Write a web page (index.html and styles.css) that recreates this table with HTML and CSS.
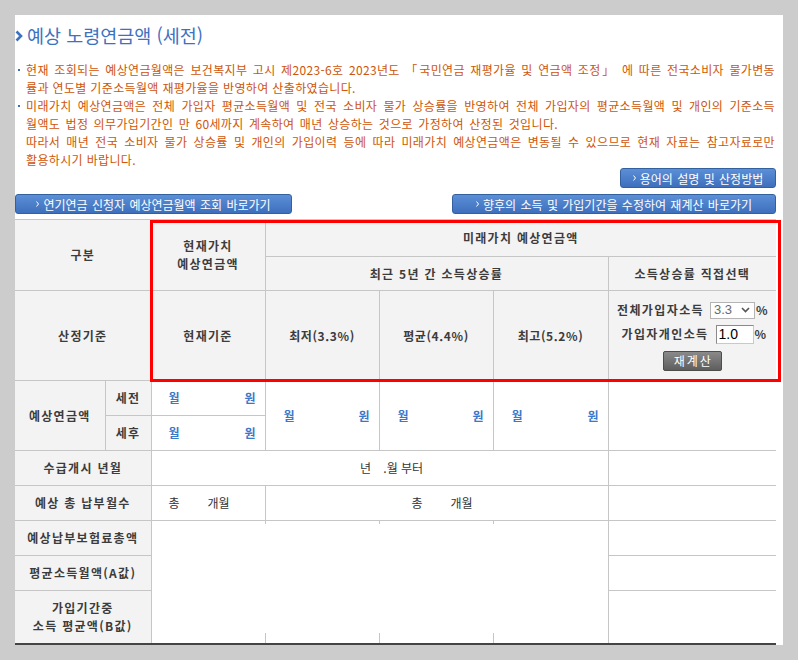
FILE: index.html
```html
<!DOCTYPE html>
<html lang="ko">
<head>
<meta charset="utf-8">
<title>예상 노령연금액 (세전)</title>
<link rel="stylesheet" href="styles.css">
</head>
<body>
<div class="panel">
  <h2 class="title"><svg class="chev" width="8" height="12" viewBox="0 0 8 12"><polyline points="1.5,1.5 6,6 1.5,10.5" fill="none" stroke="#3d72c0" stroke-width="2.6"/></svg>예상 노령연금액 (세전)</h2>

  <div class="notes">
    <p class="item"><span class="ln w749">현재 조회되는 예상연금월액은 보건복지부 고시 제2023-6호 2023년도 「국민연금 재평가율 및 연금액 조정」 에 따른 전국소비자 물가변동</span><span class="ln w346">률과 연도별 기준소득월액 재평가율을 반영하여 산출하였습니다.</span></p>
    <p class="item"><span class="ln w749">미래가치 예상연금액은 전체 가입자 평균소득월액 및 전국 소비자 물가 상승률을 반영하여 전체 가입자의 평균소득월액 및 개인의 기준소득</span><span class="ln w532">월액도 법정 의무가입기간인 만 60세까지 계속하여 매년 상승하는 것으로 가정하여 산정된 것입니다.</span><span class="ln w749">따라서 매년 전국 소비자 물가 상승률 및 개인의 가입이력 등에 따라 미래가치 예상연금액은 변동될 수 있으므로 현재 자료는 참고자료로만</span><span class="ln">활용하시기 바랍니다.</span></p>
  </div>

  <div class="btnrow end">
    <a class="btn w156"><svg class="arr" width="3" height="6" viewBox="0 0 3 6"><polyline points="0.5,0.5 2.5,3 0.5,5.5" fill="none" stroke="#fff" stroke-width="1"/></svg>용어의 설명 및 산정방법</a>
  </div>
  <div class="btnrow between">
    <a class="btn w277"><svg class="arr" width="3" height="6" viewBox="0 0 3 6"><polyline points="0.5,0.5 2.5,3 0.5,5.5" fill="none" stroke="#fff" stroke-width="1"/></svg>연기연금 신청자 예상연금월액 조회 바로가기</a>
    <a class="btn w324"><svg class="arr" width="3" height="6" viewBox="0 0 3 6"><polyline points="0.5,0.5 2.5,3 0.5,5.5" fill="none" stroke="#fff" stroke-width="1"/></svg>향후의 소득 및 가입기간을 수정하여 재계산 바로가기</a>
  </div>

  <div class="tblwrap">
    <table class="tbl">
      <colgroup>
        <col class="c90"><col class="c46"><col class="c114"><col class="c114"><col class="c114"><col class="c115"><col class="c168">
      </colgroup>
      <tr class="r37">
        <th colspan="2" rowspan="2">구분</th>
        <th rowspan="2">현재가치<br>예상연금액</th>
        <th colspan="4">미래가치 예상연금액</th>
      </tr>
      <tr class="r34">
        <th colspan="3">최근 5년 간 소득상승률</th>
        <th>소득상승률 직접선택</th>
      </tr>
      <tr class="r90">
        <th colspan="2">산정기준</th>
        <th>현재기준</th>
        <th class="num">최저(3.3%)</th>
        <th class="num">평균(4.4%)</th>
        <th class="num">최고(5.2%)</th>
        <th class="ctl">
          <div class="ctl-line"><span>전체가입자소득</span><span class="sel">3.3<svg width="9" height="6" viewBox="0 0 9 6"><polyline points="1,1 4.5,4.5 8,1" fill="none" stroke="#555" stroke-width="1.6"/></svg></span><span class="pct">%</span></div>
          <div class="ctl-line l2"><span>가입자개인소득</span><input class="inp" type="text" value="1.0"><span class="pct">%</span></div>
          <button class="recalc" type="button">재계산</button>
        </th>
      </tr>
      <tr class="r35">
        <th rowspan="2">예상연금액</th>
        <th>세전</th>
        <td class="amt first"><span>월</span><span>원</span></td>
        <td rowspan="2" class="amt"><span>월</span><span>원</span></td>
        <td rowspan="2" class="amt"><span>월</span><span>원</span></td>
        <td rowspan="2" class="amt"><span>월</span><span>원</span></td>
        <td rowspan="2"></td>
      </tr>
      <tr class="r35">
        <th>세후</th>
        <td class="amt first"><span>월</span><span>원</span></td>
      </tr>
      <tr class="r35">
        <th colspan="2">수급개시 년월</th>
        <td colspan="4" class="start">년 <i class="gap12"></i>.월 부터</td>
        <td></td>
      </tr>
      <tr class="r35">
        <th colspan="2">예상 총 납부월수</th>
        <td class="cnt">총<i class="gap28"></i>개월</td>
        <td colspan="3" class="cnt mid">총<i class="gap28"></i>개월</td>
        <td></td>
      </tr>
      <tr class="r35">
        <th colspan="2">예상납부보험료총액</th>
        <td rowspan="3"></td>
        <td rowspan="3"></td>
        <td rowspan="3"></td>
        <td rowspan="3"></td>
        <td></td>
      </tr>
      <tr class="r35">
        <th colspan="2">평균소득월액(A값)</th>
        <td></td>
      </tr>
      <tr class="r53">
        <th colspan="2">가입기간중<br>소득 평균액(B값)</th>
        <td></td>
      </tr>
    </table>
    <div class="cover"></div>
    <div class="redbox"></div>
  </div>
</div>
</body>
</html>
```

FILE: styles.css
```css
html, body {
  margin: 0;
  padding: 0;
}
body {
  background: #cccccc;
  font-family: "Noto Sans CJK KR", "Liberation Sans", sans-serif;
  font-size: 12px;
  color: #333;
  height: 660px;
  overflow: hidden;
}
.panel {
  margin: 15px 0 0 15px;
  width: 761px;
  padding-right: 7px;
  background: #fff;
}
.title {
  margin: 0;
  padding-top: 7px;
  height: 27px;
  line-height: 27px;
  font-size: 18.5px;
  font-weight: normal;
  color: #3d72c0;
  display: flex;
  align-items: center;
}
.chev {
  margin-right: 4px;
  flex: none;
}
.notes {
  margin-top: 12px;
  padding-left: 11px;
  color: #cf5508;
  line-height: 18px;
  white-space: nowrap;
}
.item {
  margin: 0;
  position: relative;
}
.item::before {
  content: "";
  position: absolute;
  left: -8px;
  top: 8px;
  width: 2px;
  height: 2px;
  background: #3c6fbf;
}
.ln {
  display: block;
  text-align: justify;
  text-align-last: justify;
  letter-spacing: 0.35px;
}
.ln:last-child {
  text-align-last: auto;
}
.w749 { width: 749px; }
.w346 { width: 346px; }
.w532 { width: 532px; }
.btnrow {
  display: flex;
}
.btnrow.end {
  justify-content: flex-end;
  margin-top: -1px;
}
.btnrow.between {
  justify-content: space-between;
  margin-top: 6px;
}
.btn {
  box-sizing: border-box;
  height: 20px;
  display: flex;
  align-items: center;
  justify-content: center;
  gap: 4px;
  color: #fff;
  font-size: 12px;
  word-spacing: 1px;
  background: linear-gradient(#5b8fd6, #3e6fbd);
  border: 1px solid #33609f;
  border-radius: 3px;
  white-space: nowrap;
}
.w156 { width: 156px; }
.w277 { width: 277px; }
.w324 { width: 324px; }
.tblwrap {
  position: relative;
  margin-top: 5px;
}
.tbl {
  width: 761px;
  table-layout: fixed;
  border-collapse: collapse;
  border-top: 1px solid #4a4a4a;
  border-bottom: 2px solid #444;
}
.c90 { width: 90px; }
.c46 { width: 46px; }
.c114 { width: 114px; }
.c115 { width: 115px; }
.c168 { width: 168px; }
.tbl th, .tbl td {
  border: 1px solid #c6c6c6;
  padding: 0;
  text-align: center;
  vertical-align: middle;
  line-height: 18px;
}
.tbl tr > :first-child { border-left: none; }
.tbl tr > :last-child { border-right: none; }
.tbl th {
  background: #f3f3f3;
  color: #3c3c3c;
  font-weight: bold;
  letter-spacing: 1.3px;
}
.tbl th.num {
  letter-spacing: 0.6px;
}
.tbl td {
  background: #fff;
  color: #333;
}
.r37 { height: 37px; }
.r34 { height: 34px; }
.r90 { height: 90px; }
.r35 { height: 35px; }
.r53 { height: 53px; }
.tbl td.amt {
  text-align: left;
}
.amt > span {
  color: #3b78c8;
  font-weight: bold;
}
.amt > span:last-child {
  float: right;
  margin-right: 9px;
}
.amt > span:first-child {
  margin-left: 18px;
}
.amt.first > span:first-child {
  margin-left: 17px;
}
.tbl td.start {
  padding-left: 24px;
}
.gap12 {
  display: inline-block;
  width: 9px;
}
.gap28 {
  display: inline-block;
  width: 28px;
}
.tbl td.cnt {
  text-align: left;
  padding-left: 17px;
}
.tbl td.cnt.mid {
  text-align: center;
  padding-left: 11px;
}
.tbl th.ctl {
  letter-spacing: 1.4px;
}
.ctl-line {
  display: flex;
  justify-content: center;
  align-items: center;
  height: 19px;
}
.ctl-line.l2 {
  margin-top: 5px;
  padding-left: 3px;
}
.sel {
  box-sizing: border-box;
  width: 45px;
  height: 17px;
  margin-left: 6px;
  margin-right: 1px;
  border: 1px solid #b5b5b5;
  background: #fff;
  display: flex;
  align-items: center;
  justify-content: space-between;
  padding: 0 4px 0 3px;
  font-family: "Liberation Sans", sans-serif;
  font-weight: normal;
  font-size: 13px;
  color: #6a6a6a;
  letter-spacing: 0;
}
.inp {
  box-sizing: border-box;
  width: 38px;
  height: 19px;
  margin: 0 1px 0 7px;
  padding: 0 2px;
  border: 1px solid #8a8a8a;
  border-right-color: #c9c9c9;
  border-bottom-color: #c9c9c9;
  font-family: "Liberation Sans", sans-serif;
  font-size: 14px;
  color: #000;
  background: #fff;
}
.pct {
  font-weight: bold;
  letter-spacing: 0;
}
.recalc {
  display: block;
  margin: 7px auto 0;
  width: 59px;
  height: 20px;
  padding: 0 0 0 2px;
  border: 1px solid #4d4d4d;
  border-radius: 2px;
  background: linear-gradient(#8a8a8a, #5e5e5e);
  color: #fff;
  font-family: "Noto Sans CJK KR", sans-serif;
  font-size: 12px;
  letter-spacing: 2px;
  line-height: 18px;
}
.cover {
  position: absolute;
  left: 140px;
  top: 305px;
  width: 448px;
  height: 109px;
  background: #fff;
}
.redbox {
  position: absolute;
  left: 135px;
  top: 1px;
  width: 631px;
  height: 162px;
  box-sizing: border-box;
  border: 3px solid #ff0000;
  pointer-events: none;
}
```
